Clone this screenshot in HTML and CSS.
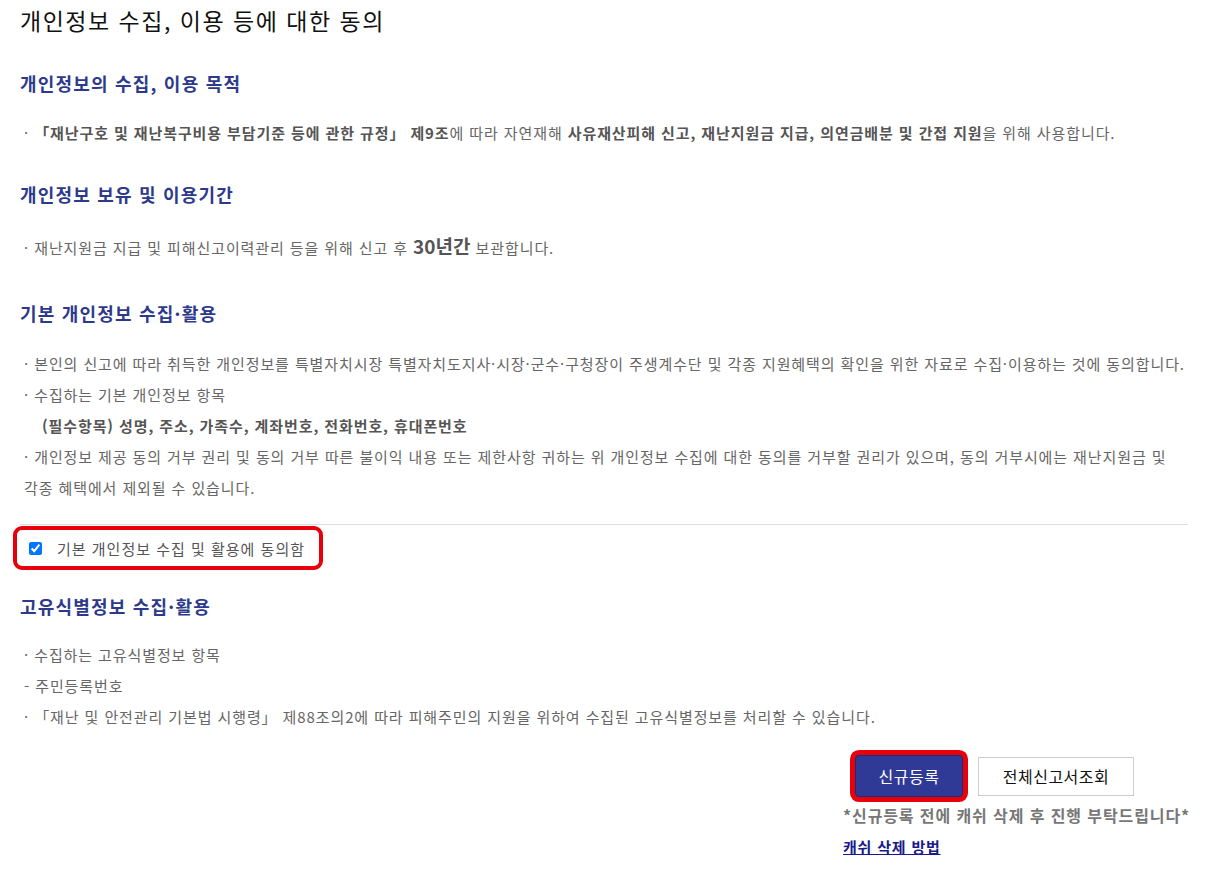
FILE: index.html
```html
<!DOCTYPE html>
<html lang="ko">
<head>
  <meta charset="UTF-8" />
  <meta name="viewport" content="width=device-width, initial-scale=1.0"/>
  <title>개인정보 수집, 이용 등에 대한 동의</title>
  <link rel="stylesheet" href="styles.css">
</head>
<body>

  <div class="agree-wrap">
    <h1 class="page-title">개인정보 수집, 이용 등에 대한 동의</h1>

    <!-- 수집 목적 -->
    <div class="agree-section">
      <h3>개인정보의 수집, 이용 목적</h3>
      <ul class="dot-list">
        <li>· <b>「재난구호 및 재난복구비용 부담기준 등에 관한 규정」 제9조</b>에 따라 자연재해 <b>사유재산피해 신고, 재난지원금 지급, 의연금배분 및 간접 지원</b>을 위해 사용합니다.</li>
      </ul>
    </div>

    <!-- 보유기간 -->
    <div class="agree-section">
      <h3>개인정보 보유 및 이용기간</h3>
      <ul class="dot-list period">
        <li>· 재난지원금 지급 및 피해신고이력관리 등을 위해 신고 후 <b class="big">30년간</b> 보관합니다.</li>
      </ul>
    </div>

    <!-- 기본 개인정보 -->
    <div class="agree-section basic">
      <h3>기본 개인정보 수집·활용</h3>
      <ul class="dot-list">
        <li>· 본인의 신고에 따라 취득한 개인정보를 특별자치시장 특별자치도지사·시장·군수·구청장이 주생계수단 및 각종 지원혜택의 확인을 위한 자료로 수집·이용하는 것에 동의합니다.</li>
        <li>· 수집하는 기본 개인정보 항목</li>
        <li class="indent"><b>(필수항목) 성명, 주소, 가족수, 계좌번호, 전화번호, 휴대폰번호</b></li>
        <li>· 개인정보 제공 동의 거부 권리 및 동의 거부 따른 불이익 내용 또는 제한사항 귀하는 위 개인정보 수집에 대한 동의를 거부할 권리가 있으며, 동의 거부시에는 재난지원금 및<br>각종 혜택에서 제외될 수 있습니다.</li>
      </ul>
    </div>

    <div class="check-row">
      <label class="check-box">
        <input type="checkbox" checked>
        <span>기본 개인정보 수집 및 활용에 동의함</span>
      </label>
    </div>

    <!-- 고유식별정보 -->
    <div class="agree-section">
      <h3>고유식별정보 수집·활용</h3>
      <ul class="dot-list tight">
        <li>· 수집하는 고유식별정보 항목</li>
        <li>- 주민등록번호</li>
        <li>· 「재난 및 안전관리 기본법 시행령」 제88조의2에 따라 피해주민의 지원을 위하여 수집된 고유식별정보를 처리할 수 있습니다.</li>
      </ul>
    </div>

    <div class="bottom-area">
      <div class="btn-row">
        <button class="btn-new">신규등록</button>
        <button class="btn-list">전체신고서조회</button>
      </div>
      <p class="notice">*신규등록 전에 캐쉬 삭제 후 진행 부탁드립니다*</p>
      <a class="cache-link" href="#">캐쉬 삭제 방법</a>
    </div>
  </div>

</body>
</html>
```

FILE: styles.css
```css
body {
  margin: 0;
  font-family: "Noto Sans CJK KR", "Noto Sans", sans-serif;
  background-color: #fff;
  color: #666;
}

.agree-wrap {
  width: 1168px;
  padding: 5px 0 0 20px;
  display: flex;
  flex-direction: column;
}

.page-title {
  margin: 0 0 36px;
  font-size: 23px;
  font-weight: normal;
  line-height: 30px;
  letter-spacing: 1.5px;
  color: #111;
}

.agree-section h3 {
  margin: 0;
  font-size: 18px;
  line-height: 24px;
  letter-spacing: 1.2px;
  color: #2d3a8c;
  font-weight: bold;
}

.dot-list {
  list-style: none;
  margin: 22px 0 34px;
  padding: 0 0 0 4px;
  font-size: 15px;
  line-height: 31px;
  letter-spacing: 0.9px;
  color: #666;
}

.dot-list li {
  height: 31px;
}

.dot-list li:last-child {
  height: auto;
}

.dot-list b {
  color: #555;
  line-height: 1;
}

.dot-list .big {
  font-size: 19px;
  letter-spacing: 0;
}

.dot-list .indent {
  padding-left: 18px;
}

.dot-list.period {
  margin: 26px 0 38px;
}

.agree-section.basic .dot-list {
  margin: 23px 0 21px;
}

.dot-list.tight {
  margin: 21px 0 22px;
}

.check-row {
  border-top: 1px solid #ddd;
  padding: 1px 0 24px;
}

.check-box {
  display: inline-flex;
  align-items: center;
  gap: 15px;
  margin-left: -7px;
  padding: 0 14px 0 12px;
  height: 36px;
  border: 4px solid #e8000b;
  border-radius: 9px;
  font-size: 15px;
  letter-spacing: 1px;
  color: #555;
}

.check-box input {
  margin: 0;
  width: 13px;
  height: 13px;
}

.bottom-area {
  align-self: flex-end;
  width: 347px;
  margin-right: -2px;
  margin-top: 1px;
}

.btn-row {
  display: flex;
  align-items: center;
  gap: 15px;
  padding-left: 12px;
}

.btn-new {
  width: 108px;
  height: 42px;
  background-color: #2e3a96;
  color: white;
  border: 1px solid #1f2a7a;
  border-radius: 4px;
  box-shadow: 0 0 0 5px #e8000b;
  font-family: inherit;
  font-size: 16px;
  letter-spacing: 0.5px;
  cursor: pointer;
}

.btn-list {
  width: 156px;
  height: 39px;
  background-color: white;
  color: #111;
  border: 1px solid #ccc;
  font-family: inherit;
  font-size: 16px;
  letter-spacing: 0.5px;
  cursor: pointer;
}

.notice {
  margin: 6px 0 0;
  font-size: 16px;
  line-height: 24px;
  font-weight: bold;
  letter-spacing: 0.9px;
  color: #777;
  white-space: nowrap;
}

.cache-link {
  display: inline-block;
  margin-top: 9px;
  font-size: 15px;
  font-weight: bold;
  letter-spacing: 0.8px;
  color: #1a1a8c;
  text-decoration: underline;
}
```
